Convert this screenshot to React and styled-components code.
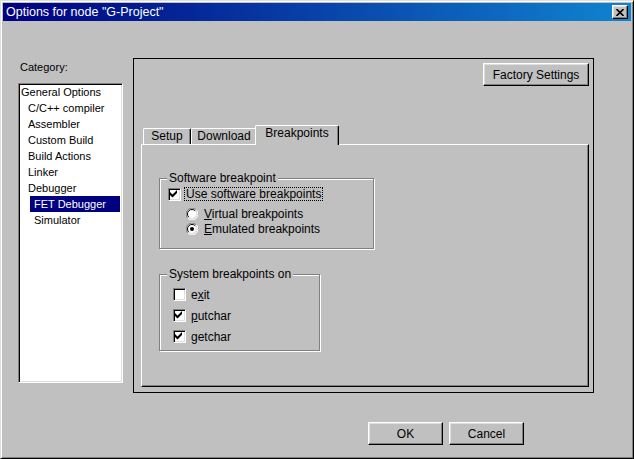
import React from 'react'
import styled, { createGlobalStyle } from 'styled-components'

const GlobalStyle = createGlobalStyle`
    html, body {
        margin: 0;
        padding: 0;
        background: #c0c0c0;
    }
    body {
        font-family: "Liberation Sans", Arial, sans-serif;
        font-size: 12px;
        color: #000;
    }
`

const Window = styled.div`
    box-sizing: border-box;
    width: 634px;
    height: 459px;
    background: #c0c0c0;
    border: 1px solid;
    border-color: #dfdfdf #000 #000 #dfdfdf;
    box-shadow: inset 1px 1px #fff, inset -1px -1px #808080;
    padding: 2px;
    display: flex;
    flex-direction: column;
`
const TitleBar = styled.div`
    height: 18px;
    display: flex;
    align-items: center;
    justify-content: space-between;
    padding: 0 3px;
    background: linear-gradient(to right, #000080, #1084d0);
    color: #fff;
    font-size: 12.5px;
    white-space: nowrap;
`
const Button = styled.button`
    box-sizing: border-box;
    width: ${props => props.$w}px;
    height: ${props => props.$h || 23}px;
    padding: 0;
    margin: 0;
    background: #c0c0c0;
    border: 1px solid;
    border-color: #fff #000 #000 #fff;
    box-shadow: inset -1px -1px #808080, inset 1px 1px #dfdfdf;
    font: 12px "Liberation Sans", Arial, sans-serif;
    color: #000;
    display: flex;
    align-items: center;
    justify-content: center;
    &:focus {
        outline: none;
    }
`
const Body = styled.div`
    display: grid;
    grid-template-columns: 105px 461px;
    column-gap: 10px;
    padding: 37px 0 0 15px;
`
const LeftColumn = styled.div`
    display: flex;
    flex-direction: column;
`
const Caption = styled.div`
    margin: 2px 0 0 2px;
    line-height: 14px;
    font-size: 11px;
`
const ListBox = styled.div`
    box-sizing: border-box;
    height: 300px;
    margin-top: 9px;
    background: #fff;
    border: 1px solid;
    border-color: #808080 #fff #fff #808080;
    box-shadow: inset 1px 1px #000, inset -1px -1px #dfdfdf;
    padding: 0 1px 1px;
    font-size: 11px;
`
const ListItem = styled.div`
    height: 16px;
    line-height: 16px;
    white-space: nowrap;
    margin-left: ${props => props.$selected ? 10 : 0}px;
    margin-right: 1px;
    padding-left: ${props => props.$selected ? 4 : [1, 8, 14][props.$level]}px;
    background: ${props => props.$selected ? '#000080' : 'transparent'};
    color: ${props => props.$selected ? '#fff' : '#000'};
`
const Panel = styled.div`
    box-sizing: border-box;
    height: 335px;
    border: 1px solid #000;
    padding: 4px 4px 5px 7px;
    display: flex;
    flex-direction: column;
`
const TabControl = styled.div`
    flex: 1;
    display: flex;
    flex-direction: column;
    margin-top: 39px;
`
const TabStrip = styled.div`
    display: flex;
    align-items: flex-end;
    height: 19px;
    padding-left: 2px;
`
const Tab = styled.div`
    box-sizing: border-box;
    position: relative;
    z-index: ${props => props.$active ? 1 : 0};
    width: ${props => props.$w + (props.$active ? 4 : 0)}px;
    height: ${props => props.$active ? 20 : 16}px;
    margin: 0 ${props => props.$active ? -2 : 0}px ${props => props.$active ? -1 : 0}px;
    padding-bottom: ${props => props.$active ? 4 : 0}px;
    background: #c0c0c0;
    border-left: 1px solid #fff;
    border-top: 1px solid #fff;
    border-right: 1px solid #000;
    border-radius: 2px 2px 0 0;
    box-shadow: inset -1px 0 #808080;
    line-height: 15px;
    text-align: center;
    white-space: nowrap;
`
const TabPane = styled.div`
    flex: 1;
    border: 1px solid;
    border-color: #fff #000 #000 #fff;
    box-shadow: inset -1px -1px #808080;
    padding: 26px 0 0 17px;
    display: flex;
    flex-direction: column;
    align-items: flex-start;
`
const GroupBox = styled.fieldset`
    box-sizing: border-box;
    width: ${props => props.$w}px;
    min-width: 0;
    margin: ${props => props.$top || 0}px 0 0;
    padding: 0;
    border: 1px solid #808080;
    box-shadow: inset 1px 1px #fff, 1px 1px #fff;
`
const GroupTitle = styled.legend`
    margin-left: 7px;
    padding: 0 2px;
    line-height: 14px;
    background: #c0c0c0;
`
const GroupBody = styled.div`
    padding: ${props => props.$pad};
`
const Row = styled.div`
    display: flex;
    align-items: center;
    height: ${props => props.$h}px;
    gap: ${props => props.$gap}px;
`
const RadioGroup = styled.div`
    margin: 4px 0 0 18px;
`
const CheckBox = styled.span`
    box-sizing: border-box;
    flex: none;
    width: 13px;
    height: 13px;
    background: #fff;
    border: 1px solid;
    border-color: #808080 #fff #fff #808080;
    box-shadow: inset 1px 1px #000, inset -1px -1px #dfdfdf;
    display: block;
`
const FocusLabel = styled.span`
    margin-left: -2px;
    padding: 0 1px;
    border: 1px dotted #000;
    line-height: 12px;
`
const Mnemonic = styled.span`
    text-decoration: underline;
`
const Footer = styled.div`
    display: flex;
    justify-content: flex-end;
    gap: 6px;
    padding-right: 107px;
    margin-top: 29px;
`

const Check = ({ checked }) => (
    <CheckBox>
        {checked && (
            <svg width="11" height="11" viewBox="0 0 11 11" style={{ display: 'block' }}>
                <polygon points="1,3 3.5,5.5 8,1 8,4 3.5,8.5 1,6" fill="#000" />
            </svg>
        )}
    </CheckBox>
)

const Radio = ({ checked }) => (
    <svg width="12" height="12" viewBox="0 0 12 12" style={{ flex: 'none', display: 'block' }}>
        <circle cx="6" cy="6" r="5" fill="#fff" />
        <path d="M10.2 1.8 A5.5 5.5 0 0 0 1.8 10.2" fill="none" stroke="#808080" />
        <path d="M9.2 2.8 A4.5 4.5 0 0 0 2.8 9.2" fill="none" stroke="#000" />
        <path d="M1.8 10.2 A5.5 5.5 0 0 0 10.2 1.8" fill="none" stroke="#fff" />
        <path d="M2.8 9.2 A4.5 4.5 0 0 0 9.2 2.8" fill="none" stroke="#dfdfdf" />
        {checked && <circle cx="6" cy="6" r="2" fill="#000" />}
    </svg>
)

const categories = [
    { label: 'General Options', level: 0 },
    { label: 'C/C++ compiler', level: 1 },
    { label: 'Assembler', level: 1 },
    { label: 'Custom Build', level: 1 },
    { label: 'Build Actions', level: 1 },
    { label: 'Linker', level: 1 },
    { label: 'Debugger', level: 1 },
    { label: 'FET Debugger', level: 2, selected: true },
    { label: 'Simulator', level: 2 },
]

const tabs = [
    { label: 'Setup', w: 48 },
    { label: 'Download', w: 66 },
    { label: 'Breakpoints', w: 80, active: true },
]

export default function App() {
    return (
        <>
            <GlobalStyle />
            <Window>
                <TitleBar>
                    <span>Options for node "G-Project"</span>
                    <Button $w={16} $h={14}>
                        <svg width="8" height="7" viewBox="0 0 8 7">
                            <path d="M0.5 0 L7.5 7 M7.5 0 L0.5 7" stroke="#000" strokeWidth="1.6" />
                        </svg>
                    </Button>
                </TitleBar>
                <Body>
                    <LeftColumn>
                        <Caption>Category:</Caption>
                        <ListBox>
                            {categories.map(c => (
                                <ListItem key={c.label} $level={c.level} $selected={c.selected}>
                                    {c.label}
                                </ListItem>
                            ))}
                        </ListBox>
                    </LeftColumn>
                    <Panel>
                        <Button $w={106} style={{ alignSelf: 'flex-end' }}>Factory Settings</Button>
                        <TabControl>
                            <TabStrip>
                                {tabs.map(t => (
                                    <Tab key={t.label} $w={t.w} $active={t.active}>{t.label}</Tab>
                                ))}
                            </TabStrip>
                            <TabPane>
                                <GroupBox $w={215}>
                                    <GroupTitle>Software breakpoint</GroupTitle>
                                    <GroupBody $pad="1px 0 12px 8px">
                                        <Row $h={16} $gap={5}>
                                            <Check checked />
                                            <FocusLabel>Use software breakpoints</FocusLabel>
                                        </Row>
                                        <RadioGroup>
                                            <Row $h={15} $gap={6}>
                                                <Radio />
                                                <span><Mnemonic>V</Mnemonic>irtual breakpoints</span>
                                            </Row>
                                            <Row $h={15} $gap={6}>
                                                <Radio checked />
                                                <span><Mnemonic>E</Mnemonic>mulated breakpoints</span>
                                            </Row>
                                        </RadioGroup>
                                    </GroupBody>
                                </GroupBox>
                                <GroupBox $w={161} $top={18}>
                                    <GroupTitle>System breakpoints on</GroupTitle>
                                    <GroupBody $pad="3px 0 3px 13px">
                                        <Row $h={21} $gap={5}>
                                            <Check />
                                            <span>e<Mnemonic>x</Mnemonic>it</span>
                                        </Row>
                                        <Row $h={21} $gap={5}>
                                            <Check checked />
                                            <span><Mnemonic>p</Mnemonic>utchar</span>
                                        </Row>
                                        <Row $h={21} $gap={5}>
                                            <Check checked />
                                            <span><Mnemonic>g</Mnemonic>etchar</span>
                                        </Row>
                                    </GroupBody>
                                </GroupBox>
                            </TabPane>
                        </TabControl>
                    </Panel>
                </Body>
                <Footer>
                    <Button $w={75}>OK</Button>
                    <Button $w={75}>Cancel</Button>
                </Footer>
            </Window>
        </>
    )
}
